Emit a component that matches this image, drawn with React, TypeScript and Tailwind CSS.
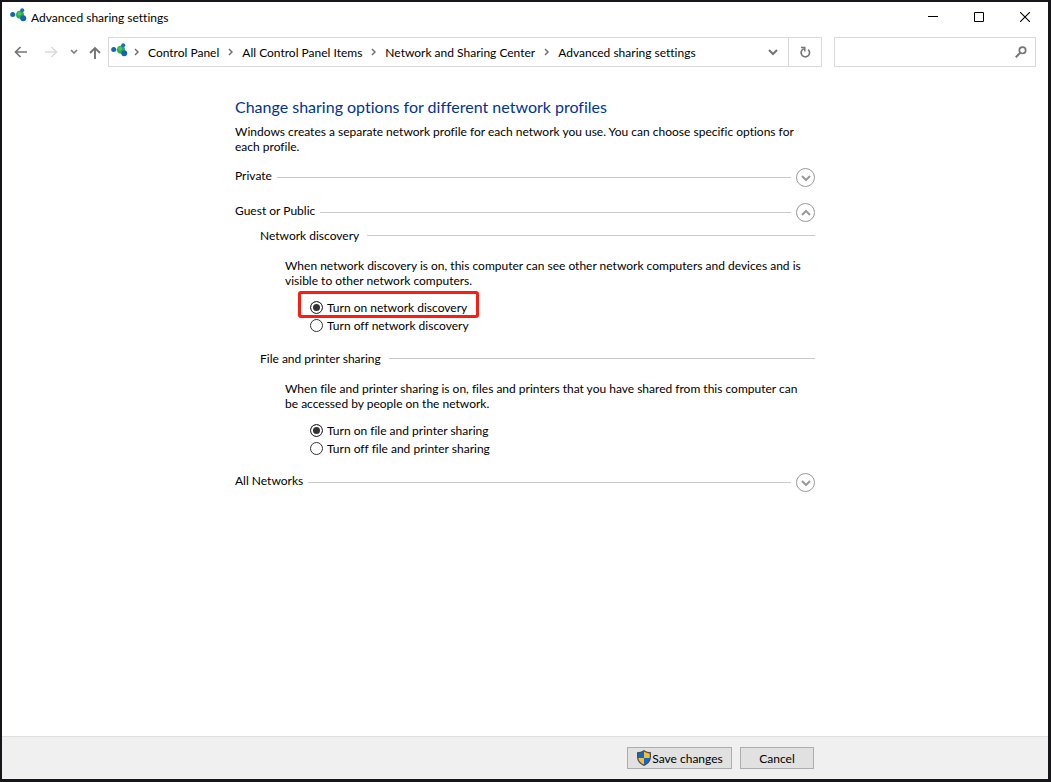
import React, { useState } from "react";
import { clsx } from "clsx";

type Choice = "on" | "off";

type ProfileRowProps = {
  title: string;
  open: boolean;
  onToggle: () => void;
};

type SharingOptionProps = {
  name: string;
  title: string;
  description: string;
  subject: string;
  highlighted?: boolean;
};

const crumbs = [
  "Control Panel",
  "All Control Panel Items",
  "Network and Sharing Center",
  "Advanced sharing settings",
];

function NetworkIcon() {
  return (
    <svg width="17" height="14" viewBox="0 0 17 14" className="mb-1 shrink-0" aria-hidden="true">
      <path d="M3 7h7l2-5M10 7l4 3" stroke="#a9c4d6" fill="none" />
      <circle cx="10" cy="6.8" r="4" fill="#2fae4e" />
      <circle cx="9.3" cy="5.8" r="1.8" fill="#4cc765" />
      <circle cx="2.7" cy="6.5" r="2.5" fill="#1467b3" />
      <circle cx="12.2" cy="2.2" r="2" fill="#1b6fb8" />
      <circle cx="13.2" cy="10.2" r="3" fill="#1263b0" />
    </svg>
  );
}

function Chevron({ className }: { className?: string }) {
  return (
    <svg width="10" height="10" viewBox="0 0 10 10" className={clsx("stroke-2", className)} aria-hidden="true">
      <path d="M1 3l4 4 4-4" fill="none" stroke="currentColor" />
    </svg>
  );
}

function CrumbArrow() {
  return (
    <svg width="5" height="8" viewBox="0 0 5 8" className="shrink-0 text-[#707070]" aria-hidden="true">
      <path d="M1 1l3 3-3 3" fill="none" stroke="currentColor" strokeWidth="1.5" />
    </svg>
  );
}

function ShieldIcon() {
  return (
    <svg width="16" height="16" viewBox="0 0 16 16" className="shrink-0" aria-hidden="true">
      <path d="M8 0C6 1.500 3.500 2.200 1 2.200v5C1 11.500 4.300 14.300 8 16c3.700-1.700 7-4.500 7-8.800v-5C12.500 2.200 10 1.500 8 0z" fill="#4d4d4d" />
      <path d="M8 1.500C6.300 2.700 4.300 3.300 2.300 3.400V8H8z" fill="#0b6bcb" />
      <path d="M8 1.500c1.700 1.200 3.700 1.800 5.700 1.900V8H8z" fill="#fdbb34" />
      <path d="M2.300 8c.3 3 2.700 5.200 5.700 6.600V8z" fill="#fdbb34" />
      <path d="M13.700 8c-.3 3-2.700 5.200-5.700 6.600V8z" fill="#0b6bcb" />
    </svg>
  );
}

function TitleBar() {
  return (
    <header className="flex h-[30px] items-center justify-between">
      <div className="flex items-center gap-1 pl-2">
        <NetworkIcon />
        <h1>Advanced sharing settings</h1>
      </div>
      <div className="flex self-stretch">
        <button type="button" aria-label="Minimize" className="flex w-[46px] items-center justify-center">
          <svg width="10" height="10" viewBox="0 0 10 10">
            <path d="M0 4.500h10" stroke="#000" />
          </svg>
        </button>
        <button type="button" aria-label="Maximize" className="flex w-[46px] items-center justify-center">
          <svg width="10" height="10" viewBox="0 0 10 10">
            <path d="M.5.5h9v9h-9z" fill="none" stroke="#000" />
          </svg>
        </button>
        <button type="button" aria-label="Close" className="flex w-[46px] items-center justify-center">
          <svg width="10" height="10" viewBox="0 0 10 10">
            <path d="M0 0l10 10M10 0L0 10" stroke="#000" strokeWidth="1.100" />
          </svg>
        </button>
      </div>
    </header>
  );
}

function NavBar() {
  return (
    <nav className="flex items-center pt-[5px] pr-3 pl-3">
      <button type="button" aria-label="Back" className="text-[#757575]">
        <svg width="14" height="12" viewBox="0 0 14 12">
          <path d="M13 6H2M6.500 1l-5 5 5 5" fill="none" stroke="currentColor" strokeWidth="1.700" />
        </svg>
      </button>
      <button type="button" aria-label="Forward" className="ml-4 text-[#dcdcdc]">
        <svg width="14" height="12" viewBox="0 0 14 12">
          <path d="M1 6h11M7.500 1l5 5-5 5" fill="none" stroke="currentColor" strokeWidth="1.700" />
        </svg>
      </button>
      <button type="button" aria-label="Recent locations" className="ml-3 text-[#808080]">
        <svg width="8" height="6" viewBox="0 0 8 6">
          <path d="M1 1l3 3 3-3" fill="none" stroke="currentColor" strokeWidth="1.700" />
        </svg>
      </button>
      <button type="button" aria-label="Up" className="ml-[11px] text-[#757575]">
        <svg width="12" height="14" viewBox="0 0 12 14">
          <path d="M6 14V3M1 8l5-5 5 5" fill="none" stroke="currentColor" strokeWidth="1.900" />
        </svg>
      </button>
      <div className="ml-[7px] flex h-[30px] flex-1 items-center border border-[#d9d9d9] pl-[2px]">
        <NetworkIcon />
        <ol className="-ml-[3px] flex flex-1 items-center">
          {crumbs.map((crumb) => (
            <li key={crumb} className="flex items-center gap-[9px] pl-[9px]">
              <CrumbArrow />
              <a href="#" className="whitespace-nowrap">
                {crumb}
              </a>
            </li>
          ))}
        </ol>
        <button type="button" aria-label="Previous locations" className="px-[10px] text-[#757575]">
          <Chevron />
        </button>
        <button
          type="button"
          aria-label="Refresh"
          className="flex w-[33px] items-center justify-center self-stretch border-l border-[#d9d9d9] text-[#757575]"
        >
          <svg width="12" height="12" viewBox="0 0 12 12">
            <path d="M9.200 3.600A4.200 4.200 0 1 1 4.800 2.800" fill="none" stroke="currentColor" strokeWidth="1.600" />
            <path d="M2 1.500h3.800v4" fill="none" stroke="currentColor" strokeWidth="1.500" />
          </svg>
        </button>
      </div>
      <div className="ml-3 flex h-[30px] w-[202px] items-center border border-[#d9d9d9] pr-2">
        <input type="text" aria-label="Search" className="min-w-0 flex-1 px-2 outline-none" />
        <svg width="12" height="12" viewBox="0 0 12 12" className="text-[#757575]" aria-hidden="true">
          <circle cx="7.500" cy="4.300" r="3.200" fill="none" stroke="currentColor" strokeWidth="1.700" />
          <path d="M5.300 6.600L.8 11.200" stroke="currentColor" strokeWidth="2" />
        </svg>
      </div>
    </nav>
  );
}

function ProfileRow({ title, open, onToggle }: ProfileRowProps) {
  return (
    <div className="flex h-5 items-start gap-[5px]">
      <h3>{title}</h3>
      <span className="mt-[9px] h-px flex-1 bg-[#cacaca]" />
      <button
        type="button"
        aria-label={title}
        aria-expanded={open}
        onClick={onToggle}
        className="flex size-[19px] items-center justify-center rounded-full border border-[#999] text-[#999]"
      >
        <Chevron className={clsx(open && "rotate-180")} />
      </button>
    </div>
  );
}

function SharingOption({ name, title, description, subject, highlighted }: SharingOptionProps) {
  const [choice, setChoice] = useState<Choice>("on");

  return (
    <fieldset className="pl-[25px]">
      <div className="flex items-center gap-2">
        <h4>{title}</h4>
        <span className="h-px flex-1 bg-[#cacaca]" />
      </div>
      <p className="pt-[15px] pr-2 pb-[10px] pl-[25px]">{description}</p>
      <div className="flex flex-col items-start pl-[50px]">
        {(["on", "off"] as Choice[]).map((value) => (
          <label key={value} className="relative flex h-[18px] items-center gap-1">
            <input
              type="radio"
              name={name}
              value={value}
              checked={choice === value}
              onChange={() => setChoice(value)}
              className="size-[13px] appearance-none rounded-full border border-[#333] bg-white checked:bg-[#333] checked:shadow-[inset_0_0_0_2px_white]"
            />
            Turn {value} {subject}
            {highlighted && value === "on" && (
              <span className="pointer-events-none absolute -inset-x-3 -top-[7px] -bottom-[2px] rounded-[3px] border-3 border-[#fb1d12]" />
            )}
          </label>
        ))}
      </div>
    </fieldset>
  );
}

export default function App() {
  const [open, setOpen] = useState("guest");

  const toggle = (id: string) => setOpen(open === id ? "" : id);

  return (
    <div className="flex min-h-screen flex-col border-2 border-r-3 border-b-3 border-[#15151a] bg-white font-['Lato','Open_Sans',sans-serif] text-[12px] leading-[15px] text-black [font-variant-ligatures:none]">
      <TitleBar />
      <NavBar />
      <main className="mx-auto w-full max-w-[580px] flex-1 pt-7">
        <h2 className="text-[16px] leading-6 text-[#003399]">
          Change sharing options for different network profiles
        </h2>
        <p className="pt-[5px] pb-[14px]">
          Windows creates a separate network profile for each network you use. You can choose specific options for
          each profile.
        </p>
        <div className="flex flex-col gap-[15px]">
          <ProfileRow title="Private" open={open === "private"} onToggle={() => toggle("private")} />
          <section className="pb-px">
            <ProfileRow title="Guest or Public" open={open === "guest"} onToggle={() => toggle("guest")} />
            {open === "guest" && (
              <div className="flex flex-col gap-[17px] pt-[5px]">
                <SharingOption
                  name="discovery"
                  title="Network discovery"
                  description="When network discovery is on, this computer can see other network computers and devices and is visible to other network computers."
                  subject="network discovery"
                  highlighted
                />
                <SharingOption
                  name="files"
                  title="File and printer sharing"
                  description="When file and printer sharing is on, files and printers that you have shared from this computer can be accessed by people on the network."
                  subject="file and printer sharing"
                />
              </div>
            )}
          </section>
          <ProfileRow title="All Networks" open={open === "all"} onToggle={() => toggle("all")} />
        </div>
      </main>
      <footer className="border-t border-[#dfdfdf] bg-[#f0f0f0] py-[10px]">
        <div className="mx-auto flex w-full max-w-[580px] justify-end gap-2 pr-px">
          <button
            type="button"
            className="flex h-[22px] w-[105px] items-center justify-center border border-[#adadad] bg-[#e1e1e1] whitespace-nowrap"
          >
            <ShieldIcon />
            Save changes
          </button>
          <button type="button" className="h-[22px] w-[74px] border border-[#adadad] bg-[#e1e1e1]">
            Cancel
          </button>
        </div>
      </footer>
    </div>
  );
}
